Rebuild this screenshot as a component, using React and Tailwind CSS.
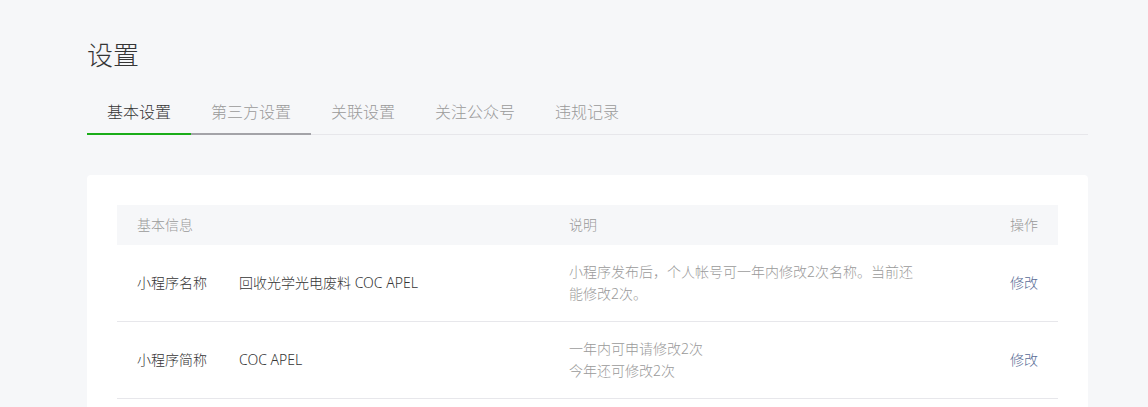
const tabs = ['基本设置', '第三方设置', '关联设置', '关注公众号', '违规记录'];

const rows = [
  {
    label: '小程序名称',
    value: '回收光学光电废料 COC APEL',
    desc: ['小程序发布后，个人帐号可一年内修改2次名称。当前还能修改2次。'],
  },
  {
    label: '小程序简称',
    value: 'COC APEL',
    desc: ['一年内可申请修改2次', '今年还可修改2次'],
  },
];

function Tabs() {
  return (
    <div className="mt-[15px] flex border-b border-[#e7e7eb]">
      {tabs.map((tab, i) => (
        <div
          key={tab}
          className={
            i === 0
              ? 'relative px-5 text-base font-light leading-[44px] text-[#353535]'
              : 'relative px-5 text-base font-light leading-[44px] text-[#9a9a9a]'
          }
        >
          {tab}
          {i === 0 ? <span className="absolute -bottom-px left-0 right-0 h-[2px] bg-[#1aad19]" /> : null}
          {i === 1 ? <span className="absolute -bottom-px left-0 right-0 h-[2px] bg-[#a3a3a8]" /> : null}
        </div>
      ))}
    </div>
  );
}

export default function App() {
  return (
    <div
      className="min-h-[407px] bg-[#f6f7f9] pl-[87px] pr-[60px] pt-[35px]"
      style={{ fontFamily: '"Noto Sans", "Noto Sans CJK SC", sans-serif' }}
    >
      <h1 className="text-[26px] leading-[40px] font-light text-[#353535]">设置</h1>
      <Tabs />

      <div className="mt-10 rounded bg-white px-[30px] pt-[30px] pb-6">
        <div className="grid grid-cols-[102px_330px_1fr_auto] items-center bg-[#f6f7f9] px-5 text-sm font-light leading-10 text-[#9a9a9a]">
          <div className="col-span-2">基本信息</div>
          <div>说明</div>
          <div>操作</div>
        </div>
        {rows.map((row) => (
          <div
            key={row.label}
            className="grid h-[77px] grid-cols-[102px_330px_1fr_auto] items-center border-b border-[#e7e7eb] px-5 text-sm font-light"
          >
            <div className="text-[#353535]">{row.label}</div>
            <div className="text-[#353535]">{row.value}</div>
            <div className="w-[352px] leading-[22px] text-[#9a9a9a]">
              {row.desc.map((line) => (
                <div key={line}>{line}</div>
              ))}
            </div>
            <div className="text-[#576b95]">修改</div>
          </div>
        ))}
      </div>
    </div>
  );
}
